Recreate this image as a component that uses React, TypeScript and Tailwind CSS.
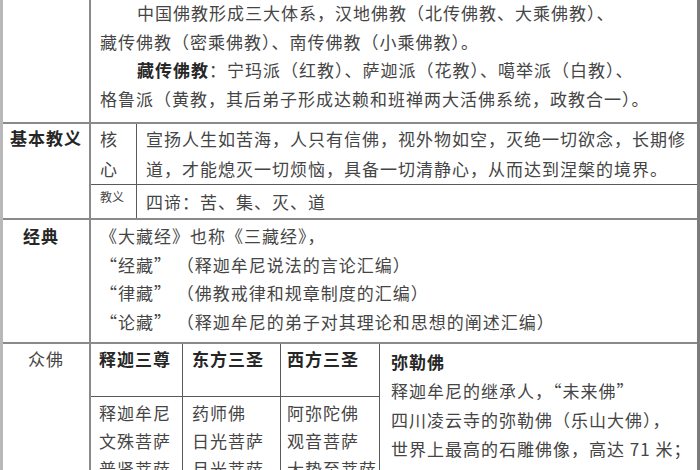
import React from 'react';

// 佛教知识表格（截图局部）
const rule = 'border-[#8a8a8a]';
const inner = 'border-[#5a5a5a]';

const sanZun = [
  { title: '释迦三尊', names: ['释迦牟尼', '文殊菩萨', '普贤菩萨'], w: 'w-[92px]', pl: 'pl-[8px]' },
  { title: '东方三圣', names: ['药师佛', '日光菩萨', '月光菩萨'], w: 'w-[98px]', pl: 'pl-[9px]' },
  { title: '西方三圣', names: ['阿弥陀佛', '观音菩萨', '大势至菩萨'], w: 'w-[99px]', pl: 'pl-[6px]' },
];

function App() {
  return (
    <div className="h-[470px] w-[700px] overflow-hidden bg-white font-['Noto_Sans_CJK_SC',sans-serif] text-[17px] tracking-[1px] text-[#454545]">
      <div className="-mt-[1px] border-l-[3px] border-r-[3px] border-l-[#b8b8b8] border-r-[#7c7c7c] whitespace-nowrap">
        {/* 三大体系 */}
        <div className={`flex border-b-2 ${rule}`}>
          <div className={`w-[88px] shrink-0 border-r-2 ${rule}`} />
          <div className="pb-[9px] pl-[9px] leading-[28.5px]">
            <p className="indent-[37px]">中国佛教形成三大体系，汉地佛教（北传佛教、大乘佛教）、</p>
            <p>藏传佛教（密乘佛教）、南传佛教（小乘佛教）。</p>
            <p className="indent-[37px]">
              <b className="text-[#262626]">藏传佛教</b>：宁玛派（红教）、萨迦派（花教）、噶举派（白教）、
            </p>
            <p>格鲁派（黄教，其后弟子形成达赖和班禅两大活佛系统，政教合一）。</p>
          </div>
        </div>

        {/* 基本教义 */}
        <div className={`flex border-b-2 ${rule}`}>
          <div className={`w-[88px] shrink-0 border-r-2 ${rule} text-center font-bold leading-[28px] text-[#262626]`}>
            基本教义
          </div>
          <div className="flex-1">
            <div className={`flex border-b ${inner}`}>
              <div className={`w-[46px] shrink-0 border-r ${inner} pl-[9px] leading-[30px]`}>
                <p>核</p>
                <p>心</p>
              </div>
              <div className="pl-[9px] leading-[30px]">
                <p>宣扬人生如苦海，人只有信佛，视外物如空，灭绝一切欲念，长期修</p>
                <p>道，才能熄灭一切烦恼，具备一切清静心，从而达到涅槃的境界。</p>
              </div>
            </div>
            <div className="flex h-[33px]">
              <div className={`w-[46px] shrink-0 border-r ${inner} pl-[9px] pt-[4px] text-[12px] leading-[16px] tracking-normal`}>
                教义
              </div>
              <div className="pl-[9px] pt-[2px] leading-[30px]">四谛：苦、集、灭、道</div>
            </div>
          </div>
        </div>

        {/* 经典 */}
        <div className={`flex border-b-2 ${rule}`}>
          <div className={`w-[88px] shrink-0 border-r-2 ${rule} pt-[2px] pr-[10px] text-center font-bold leading-[28.5px] text-[#262626]`}>
            经典
          </div>
          <div className="pb-[6px] pl-[9px] pt-[2px] leading-[28.5px]">
            <p>《大藏经》也称《三藏经》，</p>
            <p>“经藏” （释迦牟尼说法的言论汇编）</p>
            <p>“律藏” （佛教戒律和规章制度的汇编）</p>
            <p>“论藏” （释迦牟尼的弟子对其理论和思想的阐述汇编）</p>
          </div>
        </div>

        {/* 众佛 */}
        <div className="flex">
          <div className={`w-[88px] shrink-0 border-r-2 ${rule} pt-[1px] text-center leading-[28px]`}>众佛</div>
          {sanZun.map((col) => (
            <div key={col.title} className={`${col.w} shrink-0 border-r ${inner}`}>
              <div className={`h-[53px] border-b ${inner} ${col.pl} pt-[1px] font-bold leading-[28px] text-[#262626]`}>
                {col.title}
              </div>
              <div className={`${col.pl} pt-[2px] leading-[28px]`}>
                {col.names.map((n) => (
                  <p key={n}>{n}</p>
                ))}
              </div>
            </div>
          ))}
          <div className="flex-1 pl-[11px] pt-[3px] leading-[29px]">
            <p className="font-bold text-[#262626]">弥勒佛</p>
            <p>释迦牟尼的继承人，“未来佛”</p>
            <p>四川凌云寺的弥勒佛（乐山大佛），</p>
            <p>世界上最高的石雕佛像，高达 71 米；</p>
          </div>
        </div>
      </div>
    </div>
  );
}

export default App;
